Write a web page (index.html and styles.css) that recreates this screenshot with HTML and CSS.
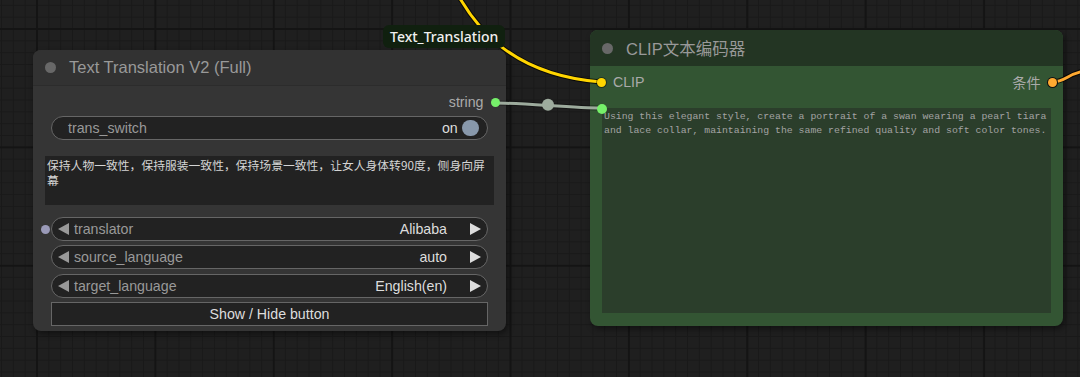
FILE: index.html
```html
<!DOCTYPE html>
<html lang="zh">
<head>
<meta charset="utf-8">
<title>Text Translation workflow</title>
<link rel="stylesheet" href="styles.css">
</head>
<body>
<div class="canvas">
  <svg class="links" width="1080" height="377" viewBox="0 0 1080 377">
    <path class="link-outline" d="M458,-5 C475,25 510,75 601,82"/>
    <path class="link-yellow" d="M458,-5 C475,25 510,75 601,82"/>
    <path class="link-outline thin" d="M495,103 C521,103 575,108 601,108"/>
    <path class="link-grey" d="M495,103 C521,103 575,108 601,108"/>
    <circle class="link-mid" cx="548" cy="104.8" r="6"/>
    <path class="link-outline" d="M1052,82 C1066,82 1068,73 1085,71"/>
    <path class="link-orange" d="M1052,82 C1066,82 1068,73 1085,71"/>
  </svg>

  <div class="link-label">Text_Translation</div>

  <div class="node node-tt">
    <div class="node-title">
      <span class="title-dot"></span>
      <span class="title-text">Text Translation V2 (Full)</span>
    </div>
    <div class="node-body">
      <div class="slot-row slot-out">
        <span class="slot-label">string</span>
        <span class="slot-dot dot-green"></span>
      </div>
      <div class="widget widget-toggle">
        <span class="w-label">trans_switch</span>
        <span class="w-value">on</span>
        <span class="toggle-knob"></span>
      </div>
      <div class="textbox textbox-tt">保持人物一致性，保持服装一致性，保持场景一致性，让女人身体转90度，侧身向屏幕</div>
      <div class="combos">
        <div class="widget widget-combo">
          <span class="slot-dot dot-input"></span>
          <svg class="arrow arrow-left" viewBox="0 0 11 12"><polygon points="11,0 11,12 0,6"/></svg>
          <span class="w-label">translator</span>
          <span class="w-value">Alibaba</span>
          <svg class="arrow arrow-right" viewBox="0 0 11 12"><polygon points="0,0 11,6 0,12"/></svg>
        </div>
        <div class="widget widget-combo">
          <svg class="arrow arrow-left" viewBox="0 0 11 12"><polygon points="11,0 11,12 0,6"/></svg>
          <span class="w-label">source_language</span>
          <span class="w-value">auto</span>
          <svg class="arrow arrow-right" viewBox="0 0 11 12"><polygon points="0,0 11,6 0,12"/></svg>
        </div>
        <div class="widget widget-combo">
          <svg class="arrow arrow-left" viewBox="0 0 11 12"><polygon points="11,0 11,12 0,6"/></svg>
          <span class="w-label">target_language</span>
          <span class="w-value">English(en)</span>
          <svg class="arrow arrow-right" viewBox="0 0 11 12"><polygon points="0,0 11,6 0,12"/></svg>
        </div>
        <div class="widget-button">Show / Hide button</div>
      </div>
    </div>
  </div>

  <div class="node node-clip">
    <div class="node-title">
      <span class="title-dot"></span>
      <span class="title-text">CLIP文本编码器</span>
    </div>
    <div class="node-body">
      <div class="slot-row slot-io">
        <span class="slot-dot dot-yellow"></span>
        <span class="slot-label">CLIP</span>
        <span class="slot-label slot-label-right">条件</span>
        <span class="slot-dot dot-orange"></span>
      </div>
      <div class="textbox textbox-clip">
        <span class="slot-dot dot-green dot-corner"></span>
        Using this elegant style, create a portrait of a swan wearing a pearl tiara and lace collar, maintaining the same refined quality and soft color tones.
      </div>
    </div>
  </div>
</div>
</body>
</html>
```

FILE: styles.css
```css
* { box-sizing: border-box; }

html, body {
  margin: 0;
  padding: 0;
  background: #1f1f1f;
}

body {
  width: 1080px;
  height: 377px;
  overflow: hidden;
  font-family: "Liberation Sans", Arial, "Noto Sans CJK SC", sans-serif;
}

.canvas {
  position: relative;
  width: 1080px;
  height: 377px;
  overflow: hidden;
  background-color: #1f1f1f;
  background-image:
    linear-gradient(90deg, #141414 2px, transparent 2px),
    linear-gradient(180deg, #141414 2px, transparent 2px),
    linear-gradient(90deg, #191919 1px, transparent 1px),
    linear-gradient(180deg, #191919 1px, transparent 1px);
  background-size: 118.4px 118.4px, 118.4px 118.4px, 11.84px 11.84px, 11.84px 11.84px;
  background-position: 36px 28px, 36px 28px, 36.5px 28.5px, 36.5px 28.5px;
}

/* links */
.links {
  position: absolute;
  left: 0;
  top: 0;
  z-index: 1;
  pointer-events: none;
}
.links path { fill: none; }
.link-outline { stroke: rgba(0, 0, 0, 0.75); stroke-width: 5; }
.link-outline.thin { stroke: rgba(0, 0, 0, 0.35); stroke-width: 5; }
.link-yellow { stroke: #ffd500; stroke-width: 3; }
.link-orange { stroke: #ffa931; stroke-width: 3; }
.link-grey { stroke: #9dab9d; stroke-width: 3; }
.link-mid { fill: #9dab9d; }

.link-label {
  position: absolute;
  left: 383px;
  top: 25px;
  z-index: 3;
  height: 23px;
  padding: 0 7px;
  border-radius: 6px;
  background: #10200f;
  color: #f0f0f0;
  font-family: "Noto Sans", "Liberation Sans", sans-serif;
  font-weight: 500;
  font-size: 14px;
  line-height: 23px;
  white-space: nowrap;
}

/* nodes */
.node {
  position: absolute;
  width: 473px;
  border-radius: 8px;
  box-shadow: 2px 3px 6px rgba(0, 0, 0, 0.45);
  overflow: visible;
}
.node-tt {
  left: 33px;
  top: 50px;
  background: #353535;
}
.node-clip {
  left: 590px;
  top: 30px;
  background: #335533;
}

.node-title {
  display: flex;
  align-items: center;
  height: 36px;
  padding-left: 12px;
  border-radius: 8px 8px 0 0;
  gap: 13px;
}
.node-tt .node-title {
  background: #323232;
  border-bottom: 1px solid #2c2c2c;
}
.node-clip .node-title {
  background: #233523;
}

.title-dot {
  width: 11px;
  height: 11px;
  border-radius: 50%;
  background: #686868;
  flex: none;
}
.title-text {
  color: #999;
  font-size: 16.5px;
  white-space: nowrap;
}

.node-body {
  display: flex;
  flex-direction: column;
  padding: 4.7px 0 5px;
}
.node-clip .node-body {
  padding-bottom: 12.4px;
}

/* slots */
.slot-row {
  display: flex;
  align-items: center;
  height: 23.6px;
  font-size: 14.2px;
  color: #aaa;
}
.slot-out {
  justify-content: flex-end;
  padding-right: 6px;
  gap: 7.5px;
}
.slot-io {
  padding: 0 6.5px 0 7.2px;
  gap: 6.8px;
}
.slot-label-right {
  margin-left: auto;
}

.slot-dot {
  position: relative;
  z-index: 2;
  display: block;
  width: 9px;
  height: 9px;
  border-radius: 50%;
  flex: none;
}
.dot-green { background: #76f06a; }
.dot-yellow { background: #ffd500; box-shadow: 0 0 0 1px rgba(0, 0, 0, 0.4); }
.dot-orange { background: #ffa931; box-shadow: 0 0 0 1px #111; }
.dot-input {
  position: absolute;
  left: -11.2px;
  top: 7px;
  background: #9a9ab8;
}
.dot-corner {
  position: absolute;
  left: -5.1px;
  top: -4.5px;
  width: 10px;
  height: 10px;
}

/* widgets */
.widget {
  position: relative;
  display: flex;
  align-items: center;
  height: 24.5px;
  margin: 1.4px 17.7px 0;
  border: 1px solid #666;
  border-radius: 12.5px;
  background: #222;
  font-size: 14.2px;
  white-space: nowrap;
}
.w-label { color: #999; }
.w-value { color: #ddd; margin-left: auto; }

.widget-toggle {
  padding: 0 8.3px 0 16.3px;
}
.toggle-knob {
  width: 16.7px;
  height: 16.7px;
  margin-left: 4.6px;
  border-radius: 50%;
  background: #8898ab;
}

.textbox-tt {
  margin: 16.3px 11.7px 0 12px;
  height: 49px;
  padding: 0.5px 2px 0;
  background: #222;
  color: #d4d4d4;
  font-family: "Noto Sans CJK SC", sans-serif;
  font-size: 11.8px;
  line-height: 15px;
}

.combos {
  display: flex;
  flex-direction: column;
  gap: 4.3px;
  margin-top: 11.7px;
}
.combos .widget {
  margin-top: 0;
  height: 24px;
}
.widget-combo {
  padding: 0 6.3px;
}
.arrow {
  width: 11px;
  height: 12px;
  flex: none;
}
.arrow-left { fill: #999; margin-right: 5px; }
.arrow-right { fill: #ddd; margin-left: 23px; }

.widget-button {
  height: 24px;
  margin: 0 17.7px;
  border: 1px solid #666;
  background: #222;
  color: #ddd;
  font-size: 14.2px;
  line-height: 22px;
  text-align: center;
}

.textbox-clip {
  position: relative;
  margin: 14px 12px 0 12.3px;
  height: 205px;
  padding: 2px 2px 0 1.7px;
  background: #2b3e2b;
  color: #a3a3a3;
  font-family: "Liberation Mono", "DejaVu Sans Mono", monospace;
  font-size: 9.83px;
  line-height: 14px;
}
```
